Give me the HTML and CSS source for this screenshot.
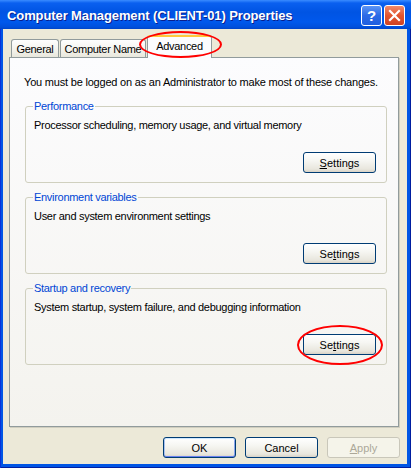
FILE: index.html
```html
<!DOCTYPE html>
<html lang="en">
<head>
    <meta charset="UTF-8">
    <title>Computer Management (CLIENT-01) Properties</title>
    <link rel="stylesheet" href="styles.css">
</head>
<body>
    <div class="window">
        <div class="titlebar">
            <span class="title">Computer Management (CLIENT-01) Properties</span>
            <div class="caption-buttons">
                <span class="cap cap-help">?</span>
                <span class="cap cap-close">
                    <svg width="13" height="13" viewBox="0 0 13 13">
                        <path d="M2 2 L11 11 M11 2 L2 11" stroke="#fff" stroke-width="2.2" stroke-linecap="square" fill="none"/>
                    </svg>
                </span>
            </div>
        </div>
        <div class="client">
            <div class="tabs">
                <span class="tab tab-general">General</span>
                <span class="tab tab-name">Computer Name</span>
                <span class="tab tab-advanced active">Advanced</span>
            </div>
            <div class="panel">
                <p class="intro">You must be logged on as an Administrator to make most of these changes.</p>
                <fieldset class="group">
                    <legend>Performance</legend>
                    <p class="desc">Processor scheduling, memory usage, and virtual memory</p>
                    <div class="group-actions">
                        <button class="btn"><u>S</u>ettings</button>
                    </div>
                </fieldset>
                <fieldset class="group">
                    <legend>Environment variables</legend>
                    <p class="desc">User and system environment settings</p>
                    <div class="group-actions">
                        <button class="btn">Se<u>t</u>tings</button>
                    </div>
                </fieldset>
                <fieldset class="group">
                    <legend>Startup and recovery</legend>
                    <p class="desc">System startup, system failure, and debugging information</p>
                    <div class="group-actions">
                        <button class="btn">Se<u>t</u>tings</button>
                    </div>
                </fieldset>
            </div>
            <div class="dialog-actions">
                <button class="btn default">OK</button>
                <button class="btn">Cancel</button>
                <button class="btn" disabled><u>A</u>pply</button>
            </div>
        </div>
        <span class="mark mark-tab"></span>
        <span class="mark mark-settings"></span>
    </div>
</body>
</html>
```

FILE: styles.css
```css
body {
    margin: 0;
    font-family: "Liberation Sans", Arial, sans-serif;
    font-size: 11px;
    color: #000;
}
.window {
    position: relative;
    width: 411px;
    height: 468px;
    display: flex;
    flex-direction: column;
    background: #0055e5;
    box-shadow: inset 1px 0 0 #0831d9, inset -1px -1px 0 #001ea0;
}
.titlebar {
    height: 29px;
    flex: none;
    display: flex;
    align-items: center;
    justify-content: space-between;
    padding: 0 6px 0 7px;
    background: linear-gradient(#3a8cff 0, #0a60f0 3px, #0054e3 12px, #0058ec 22px, #0050dc 27px, #0043c8 29px);
}
.title {
    color: #fff;
    font-weight: bold;
    font-size: 13px;
    letter-spacing: -0.1px;
    text-shadow: 1px 1px 0 #0a1e8c;
    padding-top: 1px;
}
.caption-buttons {
    display: flex;
    gap: 2px;
    padding-top: 1px;
}
.cap {
    width: 21px;
    height: 21px;
    box-sizing: border-box;
    border: 1px solid #fff;
    border-radius: 3px;
    display: flex;
    align-items: center;
    justify-content: center;
    color: #fff;
}
.cap-help {
    background: linear-gradient(#5b95f5, #2c6ae6 50%, #1f5fe0);
    font-size: 15px;
    font-weight: bold;
}
.cap-close {
    background: linear-gradient(#f08a6a, #e2552f 50%, #cf4222);
}
.client {
    flex: 1;
    display: flex;
    flex-direction: column;
    margin: 0 4px 4px 3px;
    padding: 6px 8px 6px 6px;
    background: #ece9d8;
    letter-spacing: -0.3px;
}
.tabs {
    height: 22px;
    flex: none;
    display: flex;
    align-items: flex-end;
    padding-left: 2px;
    position: relative;
    z-index: 1;
}
.tab {
    height: 18px;
    box-sizing: border-box;
    border: 1px solid #919b9c;
    border-bottom: none;
    border-radius: 3px 3px 0 0;
    background: linear-gradient(#fefefe, #f3f2ec 60%, #e9e7dc);
    display: flex;
    align-items: center;
    justify-content: center;
    margin-right: 1px;
}
.tab-general {
    width: 48px;
}
.tab-name {
    width: 86px;
}
.tab-advanced {
    width: 65px;
}
.tab.active {
    height: 23px;
    margin-bottom: -1px;
    border-top: 2px solid #ffc83c;
    background: #fcfcfe;
    padding-bottom: 3px;
}
.panel {
    flex: 1;
    border: 1px solid #919b9c;
    box-shadow: 1px 1px 0 #d0cebf;
    background: linear-gradient(#fcfcfe, #f4f3ee);
    padding: 18px 11px 0 15px;
}
.intro {
    margin: 0 0 11px -1px;
    line-height: 13px;
    white-space: nowrap;
    letter-spacing: -0.2px;
}
.group {
    margin: 0 0 8px;
    padding: 0 10px 9px 8px;
    border: 1px solid #d0d0bf;
    border-radius: 3px;
}
.group legend {
    color: #0046d5;
    padding: 0 1px;
    margin-left: -1px;
    line-height: 13px;
}
.desc {
    margin: 6px 0 0;
    line-height: 13px;
}
.group-actions {
    display: flex;
    justify-content: flex-end;
    margin-top: 20px;
}
.btn {
    width: 73px;
    height: 21px;
    padding: 0;
    font: inherit;
    color: #000;
    border: 1px solid #003c74;
    border-radius: 3px;
    background: linear-gradient(#fff, #f6f6f2 40%, #e8e6dd 85%, #d8d2c6);
}
.btn.default {
    box-shadow: inset 0 1px 0 #cee7ff, inset 0 -1px 0 #6982ee, inset 1px 0 0 #a9c1ef, inset -1px 0 0 #8aa5ec;
}
.btn:disabled {
    color: #aca899;
    border-color: #c9c7ba;
    background: #f5f4ea;
}
.dialog-actions {
    flex: none;
    display: flex;
    justify-content: flex-end;
    gap: 9px;
    margin: 10px -1px 0 0;
}
.mark {
    position: absolute;
    box-sizing: border-box;
    border: 2px solid #f00;
    border-radius: 50%;
    z-index: 2;
}
.mark-tab {
    left: 139px;
    top: 31px;
    width: 83px;
    height: 27px;
}
.mark-settings {
    left: 297px;
    top: 325px;
    width: 86px;
    height: 40px;
}
```
